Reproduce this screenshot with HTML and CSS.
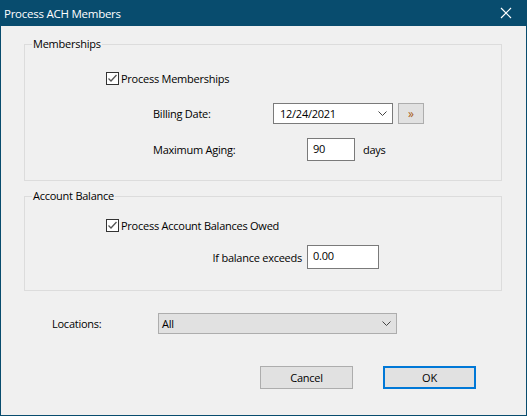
FILE: index.html
```html
<!DOCTYPE html>
<html lang="en">
<head>
    <meta charset="UTF-8">
    <title>Process ACH Members</title>
    <link rel="stylesheet" href="styles.css">
</head>
<body>
    <div class="window">
        <div class="titlebar">
            <span class="title">Process ACH Members</span>
            <svg class="close" width="12" height="12" viewBox="0 0 12 12">
                <path d="M1 1 L11 11 M11 1 L1 11" stroke="#fff" stroke-width="1.2" fill="none"/>
            </svg>
        </div>
        <div class="content">
            <div class="group group-members">
                <div class="group-title">Memberships</div>
                <div class="check-row">
                    <span class="checkbox">
                        <svg width="11" height="11" viewBox="0 0 11 11">
                            <path d="M1.5 5.5 L4 8 L9.5 2" stroke="#555" stroke-width="1.3" fill="none"/>
                        </svg>
                    </span>
                    <span>Process Memberships</span>
                </div>
                <div class="row billing-row">
                    <span class="label billing-label">Billing Date:</span>
                    <div class="combo date-combo">
                        <span>12/24/2021</span>
                        <svg width="9" height="5" viewBox="0 0 9 5">
                            <path d="M0.5 0.5 L4.5 4.5 L8.5 0.5" stroke="#444" stroke-width="1" fill="none"/>
                        </svg>
                    </div>
                    <button class="small-btn">&raquo;</button>
                </div>
                <div class="row aging-row">
                    <span class="label aging-label">Maximum Aging:</span>
                    <div class="textbox aging-box">90</div>
                    <span class="days">days</span>
                </div>
            </div>

            <div class="group group-balance">
                <div class="group-title">Account Balance</div>
                <div class="check-row">
                    <span class="checkbox">
                        <svg width="11" height="11" viewBox="0 0 11 11">
                            <path d="M1.5 5.5 L4 8 L9.5 2" stroke="#555" stroke-width="1.3" fill="none"/>
                        </svg>
                    </span>
                    <span>Process Account Balances Owed</span>
                </div>
                <div class="row balance-row">
                    <span class="label balance-label">If balance exceeds</span>
                    <div class="textbox balance-box">0.00</div>
                </div>
            </div>

            <div class="row locations-row">
                <span class="label locations-label">Locations:</span>
                <div class="combo locations-combo">
                    <span>All</span>
                    <svg width="9" height="5" viewBox="0 0 9 5">
                        <path d="M0.5 0.5 L4.5 4.5 L8.5 0.5" stroke="#444" stroke-width="1" fill="none"/>
                    </svg>
                </div>
            </div>

            <div class="buttons">
                <button class="btn">Cancel</button>
                <button class="btn btn-default">OK</button>
            </div>
        </div>
    </div>
</body>
</html>
```

FILE: styles.css
```css
html, body {
    margin: 0;
    padding: 0;
}
body {
    font-family: "Open Sans", "Noto Sans", sans-serif;
    font-size: 11px;
    letter-spacing: -0.25px;
    color: #000;
    background-color: #f0f0f0;
}
.window {
    width: 527px;
    height: 416px;
    box-sizing: border-box;
    border: 1px solid #084c6e;
    border-top: none;
    background-color: #f0f0f0;
}
.titlebar {
    height: 26px;
    margin: 0 -1px;
    background-color: #084c6e;
    color: #fff;
    display: flex;
    align-items: center;
    justify-content: space-between;
    padding: 0 15px 0 4px;
}
.title {
    font-size: 11.5px;
}
.content {
    padding: 18px 24px 0 23px;
}
.group {
    border: 1px solid #dcdcdc;
}
.group-members {
    height: 135px;
}
.group-balance {
    margin-top: 15px;
    height: 93px;
}
.group-title {
    width: fit-content;
    margin: -9px 0 0 7px;
    padding: 0 1px;
    height: 16px;
    line-height: 16px;
    background-color: #f0f0f0;
}
.check-row {
    display: flex;
    align-items: center;
    height: 19px;
    padding-left: 81px;
    gap: 2px;
}
.group-members .check-row {
    margin-top: 17px;
}
.group-balance .check-row {
    margin-top: 12px;
}
.checkbox {
    width: 11px;
    height: 11px;
    border: 1px solid #333;
    background-color: #fff;
    display: flex;
}
.row {
    display: flex;
    align-items: center;
}
.label {
    white-space: nowrap;
}
.billing-row {
    margin-top: 14px;
    height: 22px;
    padding-left: 128px;
}
.billing-label {
    width: 120px;
}
.combo {
    box-sizing: border-box;
    height: 21px;
    display: flex;
    align-items: center;
    justify-content: space-between;
    padding: 0 5px 0 6px;
}
.date-combo {
    width: 120px;
    border: 1px solid #7a7a7a;
    background-color: #fff;
}
.small-btn {
    box-sizing: border-box;
    width: 26px;
    height: 21px;
    margin: 1px 0 0 5px;
    padding: 0;
    border: 1px solid #adadad;
    background-color: #e1e1e1;
    color: #a85a12;
    font-family: inherit;
    font-size: 12px;
    line-height: 17px;
}
.aging-row {
    margin-top: 14px;
    height: 23px;
    padding-left: 128px;
}
.aging-label {
    width: 154px;
}
.textbox {
    box-sizing: border-box;
    border: 1px solid #7a7a7a;
    background-color: #fff;
    padding: 2px 5px;
    line-height: 16px;
}
.aging-box {
    width: 48px;
    height: 23px;
}
.days {
    margin-left: 8px;
}
.balance-row {
    margin-top: 10px;
    height: 24px;
    padding-left: 160px;
}
.balance-label {
    width: 117px;
    padding-right: 5px;
    text-align: right;
}
.balance-box {
    width: 72px;
    height: 24px;
}
.locations-row {
    margin-top: 22px;
    padding-left: 28px;
}
.locations-label {
    width: 106px;
}
.locations-combo {
    width: 239px;
    border: 1px solid #adadad;
    background-color: #e1e1e1;
    padding-left: 3px;
}
.buttons {
    display: flex;
    gap: 30px;
    margin-top: 32px;
    padding-left: 236px;
}
.btn {
    box-sizing: border-box;
    width: 93px;
    height: 23px;
    padding: 0;
    border: 1px solid #adadad;
    background-color: #e1e1e1;
    font-family: inherit;
    font-size: 11px;
    letter-spacing: inherit;
    color: #000;
}
.btn-default {
    border: 2px solid #0078d7;
}
```
